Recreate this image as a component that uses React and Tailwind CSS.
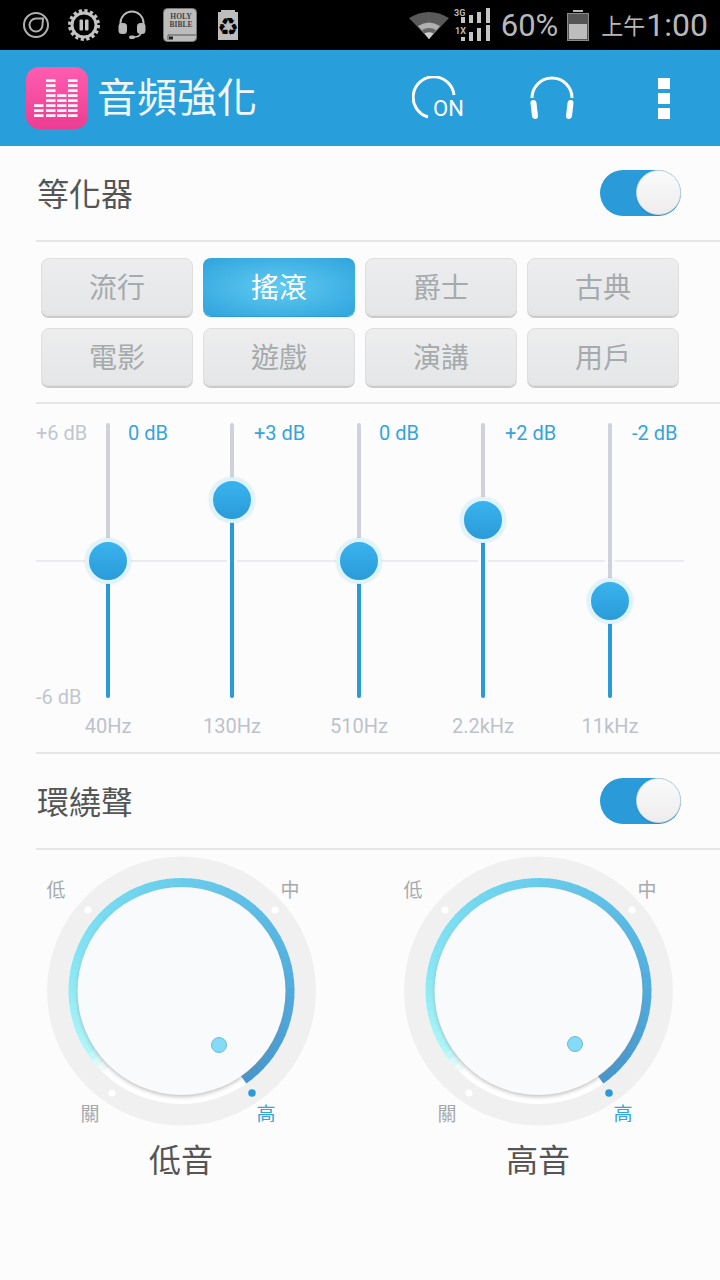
import React from 'react';

const cjk = "font-['Roboto','Noto_Sans_CJK_TC',sans-serif]";

const presets = ['流行', '搖滾', '爵士', '古典', '電影', '遊戲', '演講', '用戶'];

// top = thumb centre measured from the top of the track
const bands = [
    { hz: '40Hz', db: '0 dB', top: 138, col: 'w-[124px]', label: 'left-[22px]' },
    { hz: '130Hz', db: '+3 dB', top: 77, col: 'w-[124px]', label: 'left-[24px]' },
    { hz: '510Hz', db: '0 dB', top: 138, col: 'w-[130px]', label: 'left-[22px]' },
    { hz: '2.2kHz', db: '+2 dB', top: 97, col: 'w-[118px]', label: 'left-[24px]' },
    { hz: '11kHz', db: '-2 dB', top: 178, col: 'w-[136px]', label: 'left-[24px]' },
];

function StatusIcons() {
    return (
        <div className="flex items-center pl-[23px]">
            <svg width="26" height="26" viewBox="0 0 26 26" fill="none" stroke="#b0b0b0">
                <circle cx="13" cy="13" r="12" strokeWidth="2" />
                <path d="M20 6.5 H13 A6.5 6.5 0 1 0 19.5 13 Z" strokeWidth="2" />
            </svg>
            <svg className="ml-[19px]" width="32" height="32" viewBox="0 0 32 32">
                <circle cx="16" cy="16" r="13.5" fill="none" stroke="#c4c4c4" strokeWidth="5" strokeDasharray="3 2.3" />
                <circle cx="16" cy="16" r="12" fill="none" stroke="#c4c4c4" strokeWidth="3" />
                <rect x="11.5" y="10.5" width="3.5" height="11" rx="1" fill="#c4c4c4" />
                <rect x="17" y="10.5" width="3.5" height="11" rx="1" fill="#c4c4c4" />
            </svg>
            <svg className="ml-[18px]" width="28" height="30" viewBox="0 0 28 30" fill="none">
                <path d="M2.5 16 V13 A11.5 11.5 0 0 1 25.5 13 V16" stroke="#b8b8b8" strokeWidth="2" />
                <rect x="0.5" y="13" width="8.5" height="11" rx="3.5" fill="#b8b8b8" />
                <rect x="19" y="13" width="8.5" height="11" rx="3.5" fill="#b8b8b8" />
                <path d="M23 23 Q22 27 16 27" stroke="#b8b8b8" strokeWidth="1.5" />
                <rect x="11" y="25.5" width="6" height="3.5" rx="1.7" fill="#b8b8b8" />
            </svg>
            <svg className="ml-[17px]" width="34" height="34" viewBox="0 0 34 34">
                <rect x="0.5" y="0.5" width="33" height="33" rx="4" fill="#bcbcbc" stroke="#777" />
                <path d="M5 27 H33 M5 27 V32" stroke="#555" strokeWidth="1" fill="none" />
                <rect x="6" y="28.5" width="4" height="3" fill="#222" />
                <text x="18" y="11" textAnchor="middle" fontFamily="Liberation Serif" fontWeight="700" fontSize="7.5" fill="#444">HOLY</text>
                <text x="18" y="19" textAnchor="middle" fontFamily="Liberation Serif" fontWeight="700" fontSize="7.5" fill="#444">BIBLE</text>
            </svg>
            <div className="relative ml-[21px] flex h-[30px] w-[20px] items-center justify-center overflow-hidden bg-[#bdbdbd] pt-[3px] text-[24px] leading-none text-black font-['DejaVu_Sans',sans-serif]">
                ♻
                <div className="absolute left-0 top-0 h-[2px] w-[3px] bg-black" />
                <div className="absolute right-0 top-0 h-[2px] w-[3px] bg-black" />
            </div>
        </div>
    );
}

function StatusRight() {
    // [x, top, bottom] of each signal bar
    const bars = [
        [462, 17, 23], [470, 15, 23], [478, 12, 23], [487, 8, 23],
        [462, 37, 41], [470, 32, 41], [478, 28, 41], [487, 25, 41],
    ];
    return (
        <div className={`flex items-center pr-[12px] text-[#b8b8b8] ${cjk}`}>
            <svg width="40" height="30" viewBox="0 0 40 30">
                <path d="M0 8 Q20 -4 40 8 L20 29 Z" fill="#5a5a5a" />
                <path d="M9 16 Q20 9 31 16 L20 29 Z" fill="#b0b0b0" />
                <path d="M13 20 Q20 16 27 20 L20 29 Z" fill="#666" />
                <path d="M15.5 23.5 Q20 21 24.5 23.5 L20 29 Z" fill="#d0d0d0" />
            </svg>
            <svg className="ml-[5px]" width="38" height="34" viewBox="455 8 38 34">
                <text x="455" y="16" fontFamily="Roboto" fontWeight="700" fontSize="9" fill="#b8b8b8">3G</text>
                <text x="456" y="34" fontFamily="Roboto" fontWeight="700" fontSize="9" fill="#b8b8b8">1X</text>
                {bars.map(([x, top, bottom]) => (
                    <rect key={`${x}-${top}`} x={x} y={top} width="4" height={bottom - top} fill="#c4c4c4" />
                ))}
            </svg>
            <span className="ml-[9px] text-[31px] leading-none">60%</span>
            <div className="ml-[9px] flex flex-col items-center">
                <div className="h-[2px] w-[10px] bg-[#b8b8b8]" />
                <div className="mt-[1px] flex h-[28px] w-[22px] flex-col justify-end border border-[#8a8a8a] bg-[#555] p-[1px]">
                    <div className="h-[15px] bg-[#bdbdbd]" />
                </div>
            </div>
            <span className="ml-[12px] mt-[4px] text-[22px] leading-none">上午</span>
            <span className="ml-[1px] text-[32px] leading-none">1:00</span>
        </div>
    );
}

function AppLogo() {
    const rows = [12.3, 17.3, 22.3, 27.3, 32.3, 37.3, 42.3, 47.3];
    const cols = [[8, 5], [20, 0], [31, 3], [42, 0]];
    return (
        <div className="h-[62px] w-[62px] rounded-[13px] bg-gradient-to-b from-[#ff5cb0] to-[#ec3d92]">
            <svg width="62" height="62" viewBox="0 0 62 62">
                {cols.map(([x, from]) =>
                    rows.slice(from).map((y) => (
                        <rect key={`${x}-${y}`} x={x} y={y} width="9.5" height="2.6" fill="#fff" />
                    ))
                )}
            </svg>
        </div>
    );
}

function Toggle() {
    return (
        <div className="flex h-[46px] w-[81px] justify-end rounded-full bg-[#2a9bd8]">
            <div className="h-[45px] w-[45px] rounded-full border border-[#d8d8d8] bg-gradient-to-b from-[#fbfbfb] to-[#eeecec] shadow-[0_1px_1px_rgba(0,0,0,0.15)]" />
        </div>
    );
}

function SectionHeader({ title }) {
    return (
        <div className="flex h-[94px] items-center justify-between pl-[37px] pr-[39px]">
            <span className={`pt-[3px] text-[32px] leading-none text-[#555555] ${cjk}`}>{title}</span>
            <Toggle />
        </div>
    );
}

function Divider() {
    return <div className="ml-[36px] h-[2px] bg-[#e6e6e6]" />;
}

function Slider({ band }) {
    return (
        <div className={`flex flex-col items-center ${band.col}`}>
            <div className="relative h-[275px] w-[4px] rounded-full bg-[#cfd2da] shadow-[0_0_0_3px_#fcfcfc]">
                <div
                    className="absolute bottom-0 left-0 w-[4px] rounded-full bg-[#2a9bd6]"
                    style={{ top: band.top }}
                />
                <div
                    className="absolute left-1/2 h-[46px] w-[46px] -translate-x-1/2 -translate-y-1/2 rounded-full border-[4px] border-[#dff3fb] bg-gradient-to-b from-[#3ab3ee] to-[#2a9bd8] shadow-[0_0_2px_rgba(0,0,0,0.12)]"
                    style={{ top: band.top }}
                />
                <span className={`absolute top-0 whitespace-nowrap text-[20px] leading-[20px] text-[#35a4dc] ${band.label}`}>
                    {band.db}
                </span>
            </div>
            <span className="mt-[16px] whitespace-nowrap text-[20px] leading-[24px] text-[#bcc2cc]">{band.hz}</span>
        </div>
    );
}

function ringColor(t) {
    // colour stops along the arc, from the faded start to the blue end
    const stops = [
        [0, [240, 250, 250]],
        [0.04, [176, 246, 248]],
        [0.2, [136, 230, 244]],
        [0.4, [111, 212, 238]],
        [0.55, [101, 198, 233]],
        [0.75, [84, 178, 225]],
        [1, [69, 150, 207]],
    ];
    let i = 0;
    while (i < stops.length - 2 && t > stops[i + 1][0]) i++;
    const [t0, c0] = stops[i];
    const [t1, c1] = stops[i + 1];
    const k = (t - t0) / (t1 - t0);
    return `rgb(${c0.map((v, n) => Math.round(v + (c1[n] - v) * k)).join(',')})`;
}

function Knob({ name, dotX, dotY }) {
    const cx = 135.5;
    const cy = 135;
    const r = 108;
    const start = -136;
    const end = 145;
    const count = 70;
    const point = (deg) => {
        const a = (deg * Math.PI) / 180;
        return `${(cx + r * Math.sin(a)).toFixed(2)} ${(cy - r * Math.cos(a)).toFixed(2)}`;
    };
    const segs = [];
    for (let i = 0; i < count; i++) {
        const a0 = start + ((end - start) * i) / count;
        const a1 = start + ((end - start) * (i + 1.15)) / count;
        segs.push(
            <path
                key={i}
                d={`M${point(a0)} A${r} ${r} 0 0 1 ${point(Math.min(a1, end))}`}
                stroke={ringColor(i / (count - 1))}
                strokeWidth="10"
                fill="none"
            />
        );
    }
    const mark = 'absolute -translate-x-1/2 -translate-y-1/2 text-[19px] leading-none';
    return (
        <div className="flex w-[270px] flex-col items-center">
            <div className={`relative h-[270px] w-[270px] ${cjk}`}>
                <svg width="270" height="270" viewBox="0 0 270 270">
                    <defs>
                        <filter id={`blur-${name}`} x="-10%" y="-10%" width="120%" height="120%">
                            <feGaussianBlur stdDeviation="2" />
                        </filter>
                    </defs>
                    <circle cx={cx} cy={cy} r="134.5" fill="#f0f0f0" />
                    <circle cx={cx} cy={cy} r={r} fill="none" stroke="#ffffff" strokeWidth="10" />
                    {segs}
                    <circle cx={cx} cy={cy + 2} r="103.5" fill="#8c8c8c" opacity="0.6" filter={`url(#blur-${name})`} />
                    <circle cx={cx} cy={cy} r="104" fill="#f9fafc" />
                    <circle cx="42" cy="54" r="3.5" fill="#fff" />
                    <circle cx="229" cy="54" r="3.5" fill="#fff" />
                    <circle cx="66" cy="237" r="3.5" fill="#fff" />
                    <circle cx="206" cy="237" r="3.8" fill="#2a9bd8" />
                    <circle cx={dotX} cy={dotY} r="7.5" fill="#84dbf8" stroke="#6bbcd8" strokeWidth="1" />
                </svg>
                <span className={`${mark} left-[10px] top-[34px] text-[#a4aaad]`}>低</span>
                <span className={`${mark} left-[244px] top-[34px] text-[#a4aaad]`}>中</span>
                <span className={`${mark} left-[44px] top-[258px] text-[#a4aaad]`}>關</span>
                <span className={`${mark} left-[220px] top-[258px] text-[#35a4dc]`}>高</span>
            </div>
            <span className={`mt-[15px] text-[32px] leading-[40px] text-[#555555] ${cjk}`}>{name}</span>
        </div>
    );
}

export default function App() {
    return (
        <div className={`flex h-[1280px] w-[720px] flex-col overflow-hidden bg-[#fcfcfc] ${cjk}`}>
            <div className="flex h-[50px] items-center justify-between bg-black">
                <StatusIcons />
                <StatusRight />
            </div>

            <div className="flex h-[96px] items-center bg-[#289fdb] pl-[26px]">
                <AppLogo />
                <span className="ml-[9px] pt-[2px] text-[40px] leading-none text-[#f2f6f8]">音頻強化</span>
                <div className="relative ml-[155px] h-[44px] w-[52px]">
                    <svg width="44" height="44" viewBox="0 0 44 44" fill="none">
                        <path d="M42 19 A20.5 20.5 0 1 0 16 41" stroke="#fff" strokeWidth="3" />
                    </svg>
                    <span className="absolute left-[21px] top-[22px] text-[22px] leading-none text-white">ON</span>
                </div>
                <svg className="ml-[65px]" width="46" height="44" viewBox="0 0 46 44" fill="none">
                    <path d="M3 22 A20 20 0 0 1 43 22" stroke="#fff" strokeWidth="3" />
                    <path d="M4.5 27 L6 40" stroke="#fff" strokeWidth="6" strokeLinecap="round" />
                    <path d="M41.5 27 L40 40" stroke="#fff" strokeWidth="6" strokeLinecap="round" />
                </svg>
                <div className="ml-[83px] flex flex-col gap-[4px]">
                    <div className="h-[11px] w-[12px] bg-white" />
                    <div className="h-[11px] w-[12px] bg-white" />
                    <div className="h-[11px] w-[12px] bg-white" />
                </div>
            </div>

            <SectionHeader title="等化器" />
            <Divider />

            <div className="grid grid-cols-[repeat(4,152px)] gap-x-[10px] gap-y-[12px] pb-[16px] pl-[41px] pt-[16px]">
                {presets.map((p) =>
                    p === '搖滾' ? (
                        <div key={p} className="flex h-[58px] items-center justify-center rounded-[8px] bg-[radial-gradient(ellipse_at_center,#5fcbf0,#2fa3dd)] pt-[3px] text-[28px] text-white shadow-[0_1px_0_#2b9cd8]">
                            {p}
                        </div>
                    ) : (
                        <div key={p} className="flex h-[58px] items-center justify-center rounded-[8px] border border-[#dedede] bg-gradient-to-b from-[#ededee] to-[#e4e6e8] pt-[3px] text-[28px] text-[#a6aaac] shadow-[0_2px_0_#cbcbcb]">
                            {p}
                        </div>
                    )
                )}
            </div>
            <Divider />

            <div className="relative flex pb-[14px] pl-[46px] pt-[19px]">
                <div className="absolute left-[36px] right-[36px] top-[156px] h-[2px] bg-[#ececf0]" />
                <span className="absolute left-[36px] top-[19px] text-[20px] leading-[20px] text-[#c0c6d0]">+6 dB</span>
                <span className="absolute left-[36px] top-[283px] text-[20px] leading-[20px] text-[#c0c6d0]">-6 dB</span>
                {bands.map((b) => (
                    <Slider key={b.hz} band={b} />
                ))}
            </div>
            <Divider />

            <SectionHeader title="環繞聲" />
            <Divider />

            <div className="flex gap-[87px] pl-[46px] pt-[6px]">
                <Knob name="低音" dotX={173} dotY={189} />
                <Knob name="高音" dotX={172} dotY={188} />
            </div>
        </div>
    );
}
